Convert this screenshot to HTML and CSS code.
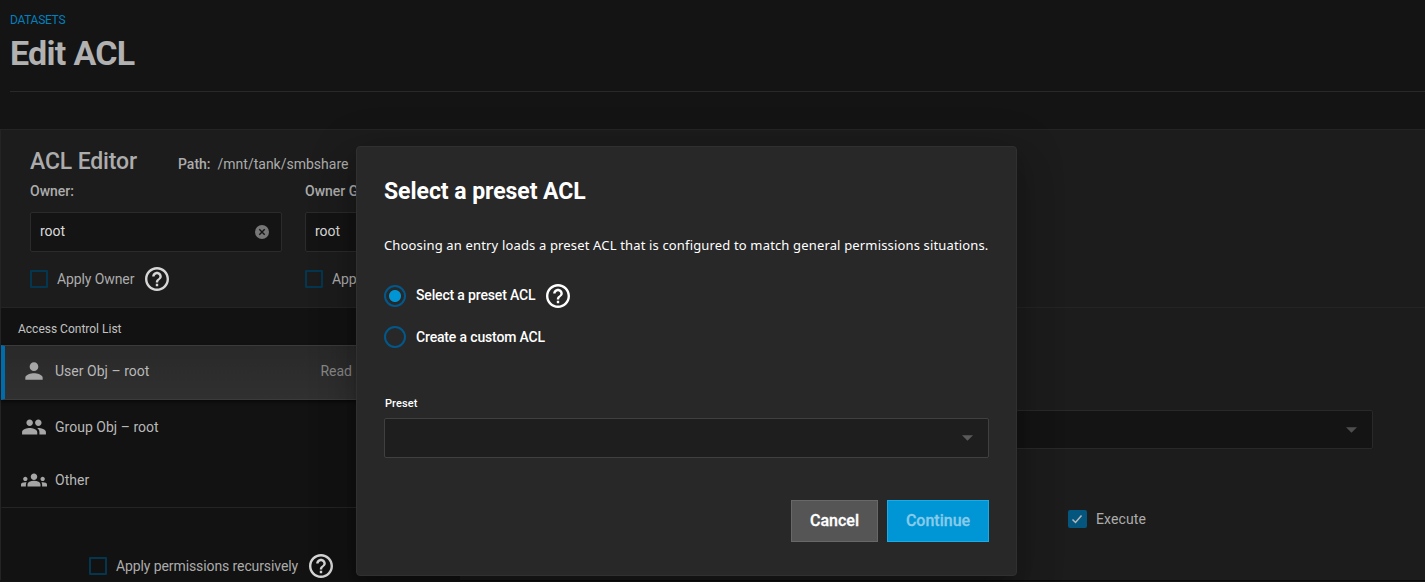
FILE: index.html
```
<!DOCTYPE html>
<html lang="en">
<head>
<meta charset="utf-8">
<title>Edit ACL</title>
<link rel="stylesheet" href="styles.css">
</head>
<body>
<svg class="defs" width="0" height="0">
  <symbol id="help" viewBox="2 2 20 20"><path d="M11 18h2v-2h-2v2zm1-16C6.48 2 2 6.48 2 12s4.48 10 10 10 10-4.48 10-10S17.52 2 12 2zm0 18c-4.41 0-8-3.59-8-8s3.59-8 8-8 8 3.59 8 8-3.59 8-8 8zm0-14c-2.210 0-4 1.790-4 4h2c0-1.100.9-2 2-2s2 .9 2 2c0 2-3 1.750-3 5h2c0-2.250 3-2.500 3-5 0-2.210-1.790-4-4-4z"/></symbol>
</svg>
<header class="page-header">
  <a class="crumb">DATASETS</a>
  <h1 class="page-title">Edit ACL</h1>
</header>
<main class="card">
  <section class="editor">
    <div class="editor-head">
      <h2 class="editor-title">ACL Editor</h2>
      <div class="path"><b>Path:</b><span>/mnt/tank/smbshare</span></div>
    </div>
    <div class="owners">
      <div class="owner">
        <label class="owner-label">Owner:</label>
        <div class="input"><span>root</span>
          <svg class="clear" viewBox="0 0 14 14"><circle cx="7" cy="7" r="7"/><path d="M4.300 4.300l5.400 5.400M9.700 4.300l-5.400 5.400"/></svg>
        </div>
        <div class="check-row"><i class="box"></i><span class="apply">Apply Owner</span><svg class="help"><use href="#help"/></svg></div>
      </div>
      <div class="owner">
        <label class="owner-label">Owner Group:</label>
        <div class="input"><span>root</span></div>
        <div class="check-row"><i class="box"></i><span class="apply">Apply Group</span></div>
      </div>
    </div>
  </section>
  <div class="columns">
    <section class="list-col">
      <h3 class="list-title">Access Control List</h3>
      <div class="ace selected">
        <svg class="ace-icon" viewBox="0 0 24 24"><path d="M12 12c2.210 0 4-1.790 4-4s-1.790-4-4-4-4 1.790-4 4 1.790 4 4 4zm0 2c-2.670 0-8 1.340-8 4v2h16v-2c0-2.660-5.330-4-8-4z"/></svg>
        <span class="ace-name user">User Obj – root</span><span class="perms">Read | Write | Execute</span>
      </div>
      <div class="ace">
        <svg class="ace-icon" viewBox="0 0 24 24"><path d="M16 11c1.660 0 2.990-1.340 2.990-3S17.660 5 16 5c-1.660 0-3 1.340-3 3s1.340 3 3 3zm-8 0c1.660 0 2.990-1.340 2.990-3S9.660 5 8 5C6.340 5 5 6.340 5 8s1.340 3 3 3zm0 2c-2.330 0-7 1.170-7 3.500V19h14v-2.500c0-2.330-4.670-3.500-7-3.500zm8 0c-.290 0-.620.020-.970.050 1.160.840 1.970 1.970 1.970 3.450V19h6v-2.500c0-2.330-4.670-3.500-7-3.500z"/></svg>
        <span class="ace-name group">Group Obj – root</span>
      </div>
      <div class="ace last">
        <svg class="ace-icon" viewBox="0 0 24 24"><path d="M12 12.750c1.630 0 3.070.390 4.240.900 1.080.480 1.760 1.560 1.760 2.730V18H6v-1.610c0-1.180.680-2.260 1.760-2.730 1.170-.520 2.610-.910 4.240-.910zM4 13c1.100 0 2-.9 2-2s-.9-2-2-2-2 .9-2 2 .9 2 2 2zm1.130 1.100c-.370-.060-.740-.100-1.130-.100-.990 0-1.930.210-2.780.580C.480 14.900 0 15.620 0 16.430V18h4.500v-1.610c0-.830.230-1.610.630-2.290zM20 13c1.100 0 2-.9 2-2s-.9-2-2-2-2 .9-2 2 .9 2 2 2zm4 3.430c0-.810-.480-1.530-1.220-1.850-.850-.370-1.790-.580-2.780-.580-.390 0-.760.040-1.130.100.400.680.630 1.460.630 2.290V18H24v-1.570zM12 6c1.660 0 3 1.340 3 3s-1.340 3-3 3-3-1.340-3-3 1.340-3 3-3z"/></svg>
        <span class="ace-name other">Other</span>
      </div>
      <div class="recursive"><i class="box"></i><span class="rec-text">Apply permissions recursively</span><svg class="help"><use href="#help"/></svg></div>
    </section>
    <section class="perm-col">
      <div class="who"><svg class="arrow" viewBox="0 0 12 6"><path d="M0 0h12L6 6z"/></svg></div>
      <div class="exec-row"><i class="box checked"><svg viewBox="0 0 18 18"><path d="M4.500 9.500l3 3 6-7"/></svg></i><span class="exec">Execute</span></div>
    </section>
  </div>
</main>
<div class="dialog">
  <h2 class="dialog-title"><span>Select a preset ACL</span></h2>
  <p class="dialog-text">Choosing an entry loads a preset ACL that is configured to match general permissions situations.</p>
  <div class="radio-row"><i class="radio on"></i><span class="r1">Select a preset ACL</span><svg class="help"><use href="#help"/></svg></div>
  <div class="radio-row second"><i class="radio"></i><span class="r2">Create a custom ACL</span></div>
  <label class="preset-label">Preset</label>
  <div class="preset"><svg class="arrow" viewBox="0 0 12 6"><path d="M0 0h12L6 6z"/></svg></div>
  <div class="actions"><button class="btn cancel">Cancel</button><button class="btn go">Continue</button></div>
</div>
</body>
</html>
```
FILE: styles.css
```
* { box-sizing: border-box; }
body {
  margin: 0; height: 582px; overflow: hidden; position: relative;
  background: #141414; color: #acacac; white-space: nowrap;
  font: 14px/20px Roboto, "Liberation Sans", sans-serif;
}
h1, h2, h3, p { margin: 0; }
.defs { position: absolute; }
.page-header { height: 92px; margin-left: 10px; padding-top: 10px; border-bottom: 1px solid #292929; }
.crumb { display: block; height: 20px; font-size: 12px; line-height: 20px; letter-spacing: -.3px; color: #0080bd; }
.page-title { font: 700 34px/46px Roboto, sans-serif; letter-spacing: -.7px; color: #b1b1b1; }
.card { margin-top: 37px; height: 452px; background: #1c1c1c; border: 1px solid #242424; border-right: 0; border-bottom-color: #0b090a; }
.editor { height: 178px; padding: 18px 29px 0; border-bottom: 1px solid #242424; }
.editor-head { display: flex; height: 33px; }
.editor-title { width: 148px; font-size: 23px; line-height: 28px; font-weight: 500; letter-spacing: -.15px; }
.path { display: flex; gap: 7px; font-size: 14px; line-height: 33px; }
.path b, .owner-label { font-weight: 500; }
.owners { display: flex; gap: 23px; }
.owner { width: 252px; }
.owner-label { display: block; height: 31px; line-height: 20px; }
.input {
  height: 40px; padding: 0 12px 0 9px; display: flex; align-items: center; justify-content: space-between;
  background: #141414; border: 1px solid #2b2b2b; border-radius: 2px; color: #dadada; line-height: 36px;
}
.input span { margin-top: -3px; }
.clear { width: 14px; height: 14px; fill: #777; stroke: #151515; stroke-width: 1.4; }
.clear circle { stroke: none; }
.check-row { display: flex; align-items: center; height: 24px; margin-top: 15px; letter-spacing: -.1px; }
.box { flex: none; width: 18px; height: 18px; border: 2px solid #053650; border-radius: 1px; margin-right: 9px; }
.help { width: 24px; height: 24px; fill: #d6d6d6; margin-left: 11px; flex: none; }
.columns { display: flex; height: 273px; }
.list-col { width: 459px; background: #121212; }
.list-title { height: 37px; padding-left: 17px; font-size: 12px; line-height: 42px; font-weight: 400; color: #c2c2c2; }
.ace { display: flex; align-items: center; height: 54px; padding: 0 0 1px 19px; border: 1px solid transparent; color: #b8b8b8; }
.ace.selected { height: 55px; padding: 0 0 3px 16px; background: linear-gradient(#292929, #303030); border-color: #3b3b3b; border-left: 4px solid #006cab; box-shadow: 0 2px 3px #0008; overflow: hidden; }
.ace.last { padding-bottom: 3px; border-bottom-color: #242424; }
.ace-icon { flex: none; width: 26px; height: 26px; fill: #a6a6a6; margin-right: 8px; }
.ace-name { letter-spacing: .02px; }
.perms { margin-left: 171px; color: #888; }
.recursive { display: flex; align-items: center; height: 24px; margin: 46px 0 0 88px; letter-spacing: -.1px; }
.perm-col { flex: 1; padding-top: 102px; }
.who { width: 913px; height: 39px; display: flex; align-items: center; justify-content: flex-end; padding-right: 15px; background: #141414; border: 1px solid #292929; border-radius: 2px; }
.arrow { width: 11px; height: 6px; fill: #4e4e4e; }
.exec-row { display: flex; align-items: center; margin: 60px 0 0 608px; letter-spacing: .1px; }
.box.checked { width: 19px; background: #05567f; border-color: #05567f; border-radius: 2px; margin-right: 9px; }
.checked svg { display: block; width: 18px; height: 18px; margin: -2px; fill: none; stroke: #b6b6b6; stroke-width: 1.5; }
.dialog {
  position: absolute; left: 356px; top: 146px; width: 661px; height: 430px; padding: 28px 28px 0;
  background: #282828; border: 1px solid #303030; border-radius: 4px; color: #fff;
  box-shadow: 0 11px 15px -7px #0003, 0 24px 38px 3px #00000024, 0 9px 46px 8px #0000001f;
}
.dialog-title { font-size: 23px; line-height: 34px; height: 58px; font-weight: 700; margin-left: -1px; letter-spacing: -.05px; }
.dialog-text { height: 50px; font: 400 13px/24px "Noto Sans", sans-serif; margin-left: -1px; letter-spacing: .155px; }
.radio-row { display: flex; align-items: center; height: 26px; margin-left: -1px; font-weight: 500; letter-spacing: -.16px; }
.radio-row.second { margin-top: 15px; }
.radio { width: 22px; height: 22px; border: 2px solid #02588a; border-radius: 50%; margin-right: 10px; }
.radio.on { background: radial-gradient(circle, #0095d5 5.5px, transparent 6.500px); }
.r1 { padding-bottom: 2px; }
.dialog .help { fill: #fff; }
.preset-label { display: block; margin-top: 43px; height: 25px; line-height: 22px; font-size: 11px; font-weight: 500; letter-spacing: .1px; }
.preset { width: 605px; height: 40px; margin-left: -1px; display: flex; align-items: center; justify-content: flex-end; padding-right: 15px; background: #1e1e1e; border: 1px solid #404040; border-radius: 2px; }
.preset .arrow { fill: #5a5a5a; }
.actions { display: flex; justify-content: flex-end; gap: 9px; margin: 42px -1px 0 0; }
.btn { height: 42px; width: 87px; padding: 0; border: 1px solid #686868; background: #555; color: #fff; font: 500 16px/40px Roboto, sans-serif; -webkit-text-stroke: .3px; }
.btn.go { width: 102px; background: #0095d5; border-color: #18ade8; color: #87cbe9; }
```
